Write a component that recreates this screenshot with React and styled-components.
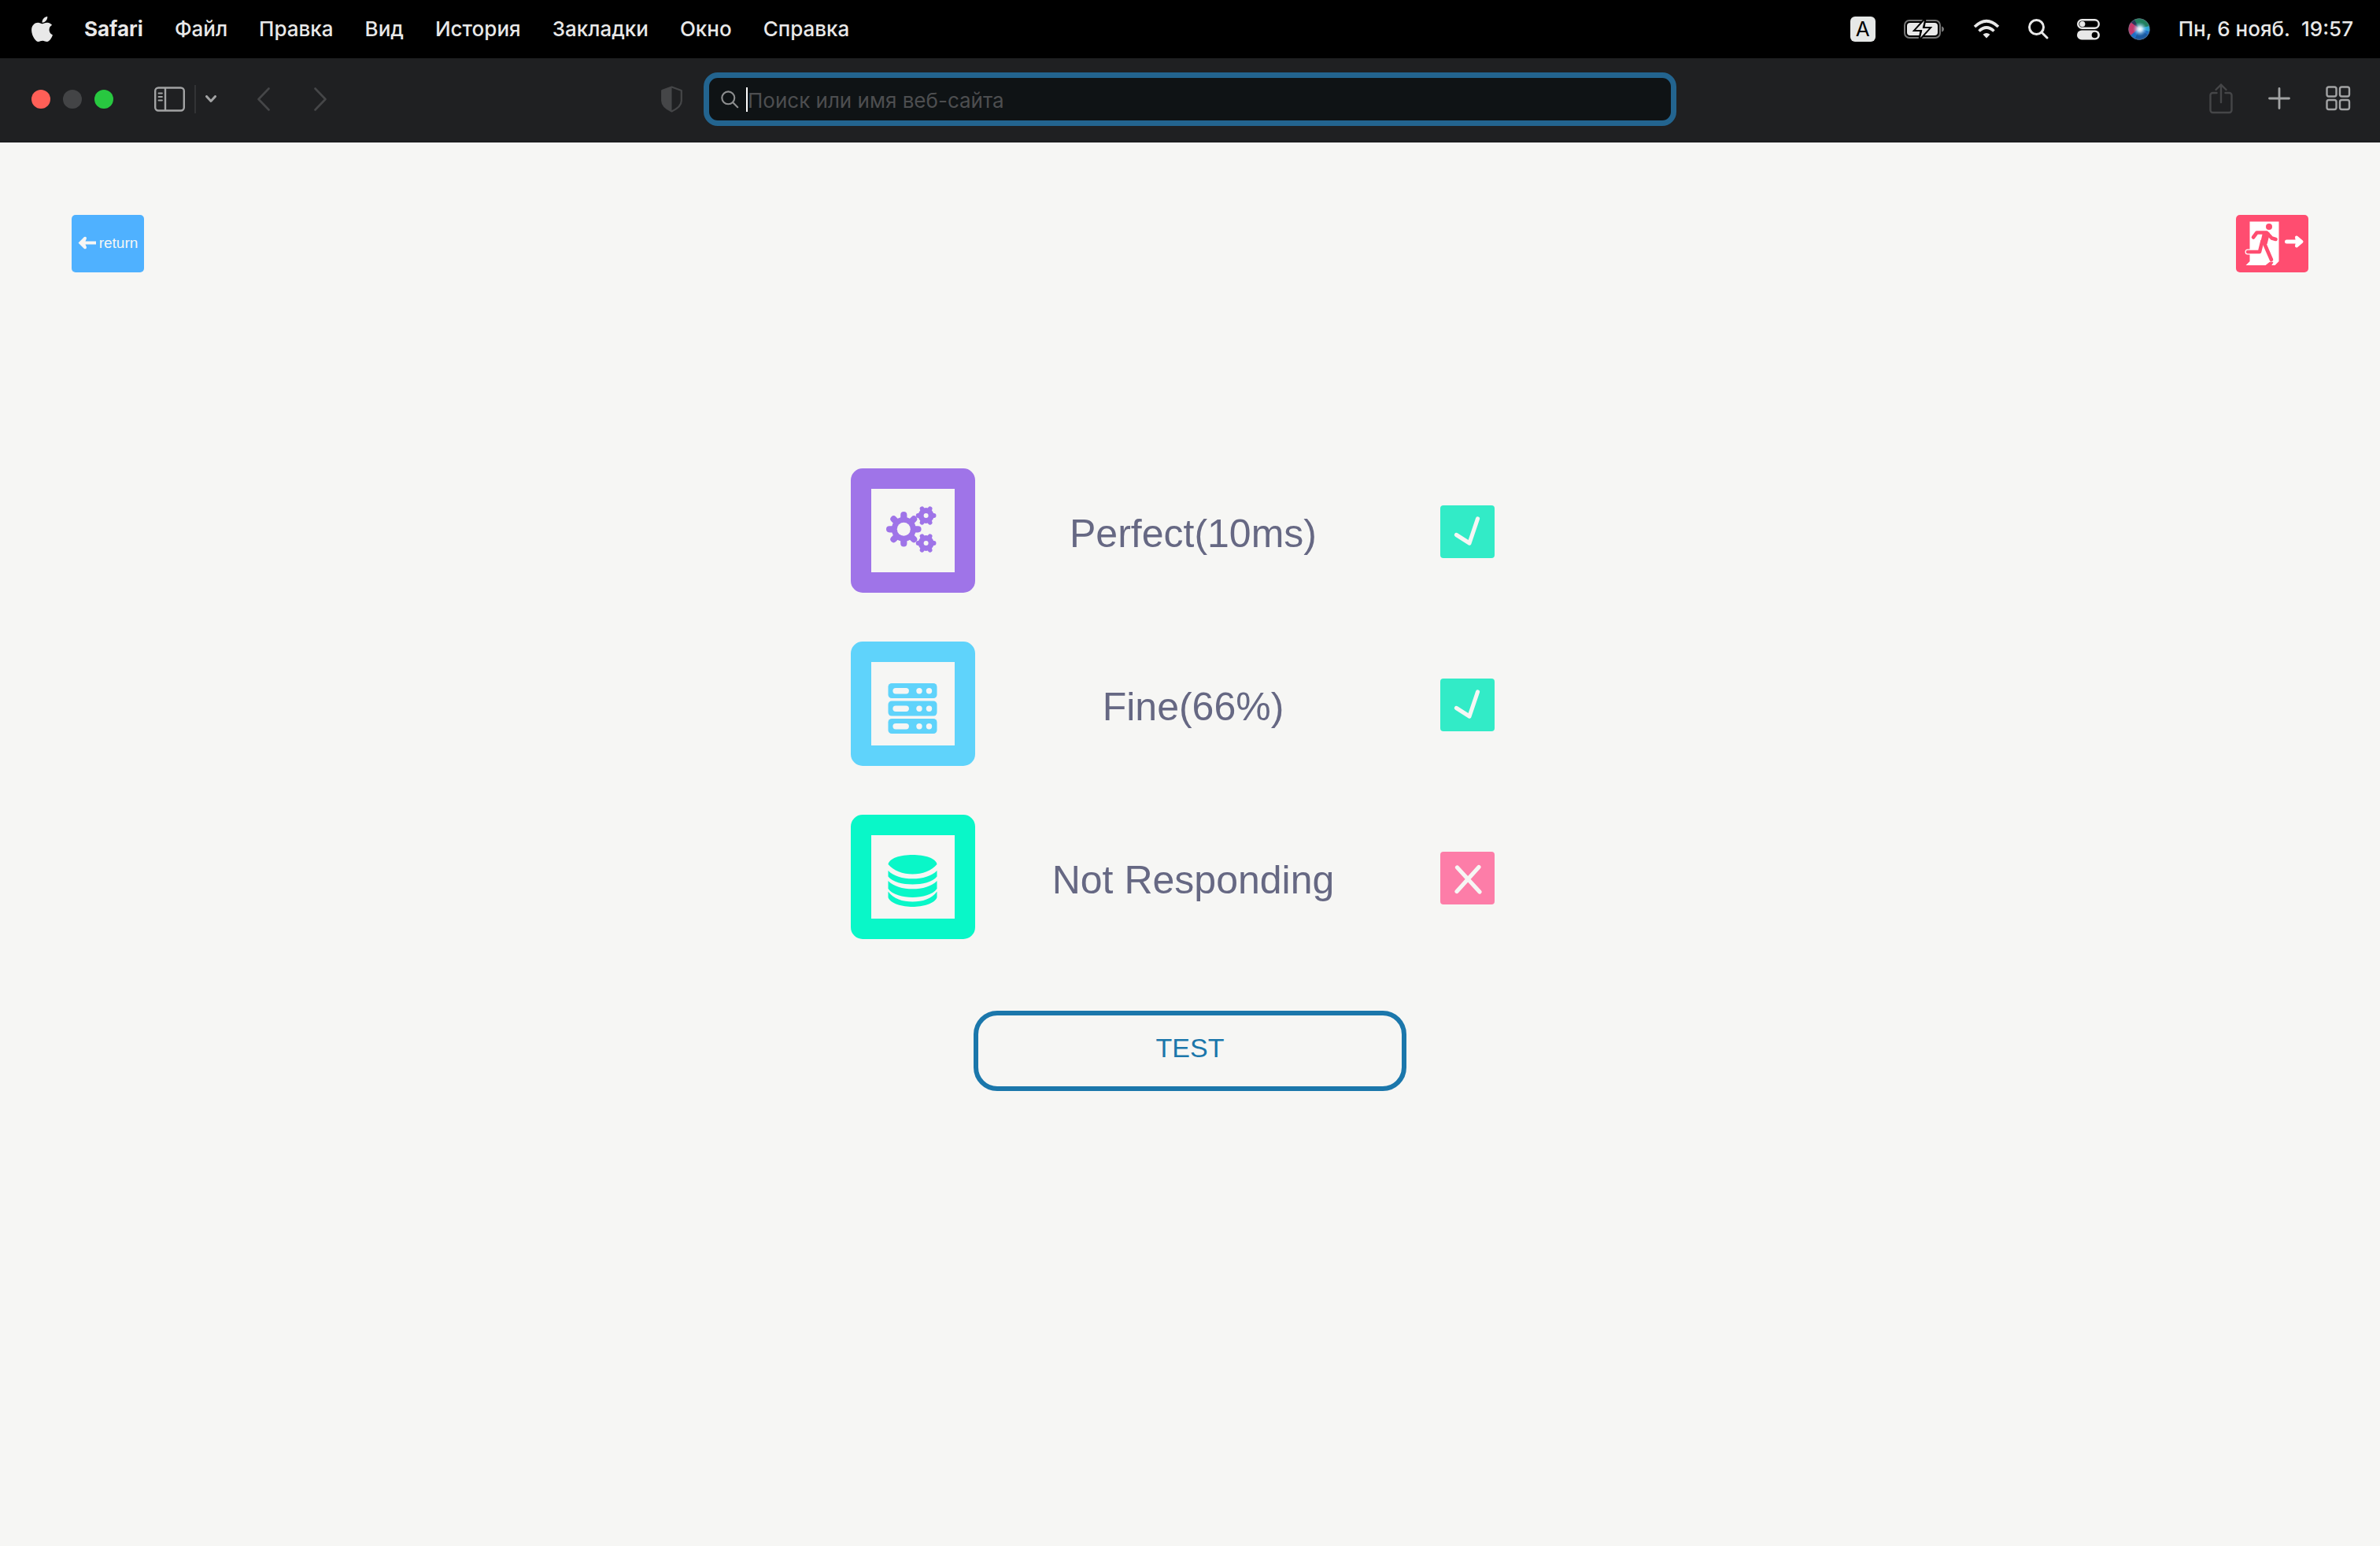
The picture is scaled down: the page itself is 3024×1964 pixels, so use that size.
import React from "react";
import styled, { createGlobalStyle } from "styled-components";

const GlobalStyle = createGlobalStyle`
  * { box-sizing: border-box; }
  body {
    margin: 0;
    background: #f6f6f4;
    font-family: "Liberation Sans", Arial, sans-serif;
  }
  button { font: inherit; cursor: pointer; }
  svg { display: block; flex: none; }
`;

const systemFont = `Inter, "Noto Sans", sans-serif`;

/* ---------- menu bar ---------- */

const MenuBar = styled.header`
  display: flex;
  justify-content: space-between;
  align-items: center;
  height: 74px;
  padding: 0 34px 0 40px;
  background: #000;
  color: #e8e8e8;
  font-family: ${systemFont};
  font-size: 26px;
  font-weight: 500;
  line-height: 32px;
`;

const MenuList = styled.nav`
  display: flex;
  align-items: center;
  gap: 40px;
`;

const MenuButton = styled.button`
  padding: 0;
  border: 0;
  background: none;
  color: inherit;
  white-space: nowrap;
  && { font-weight: ${(p) => (p.$strong ? 700 : 500)}; }
`;

const StatusList = styled.div`
  display: flex;
  align-items: center;
  gap: 36px;
`;

const InputSource = styled.span`
  width: 32px;
  height: 32px;
  border-radius: 6px;
  background: #e6e8e7;
  color: #000;
  font-weight: 400;
  text-align: center;
`;

const Clock = styled.time`
  display: flex;
  gap: 14px;
  white-space: nowrap;
`;

/* ---------- browser toolbar ---------- */

const Toolbar = styled.div`
  display: grid;
  grid-template-columns: 1fr minmax(0, 1236px) 1fr;
  align-items: center;
  height: 107px;
  padding-bottom: 2px;
  background: #1f2022;
  border-bottom: 1px solid #17181a;
`;

const ToolbarSide = styled.div`
  display: flex;
  align-items: center;
  justify-content: ${(p) => (p.$end ? "flex-end" : "space-between")};
  gap: ${(p) => (p.$end ? 45 : 0)}px;
  padding: ${(p) => (p.$end ? "0 37px 2px 0" : "0 27px 0 40px")};
`;

const ToolGroup = styled.div`
  display: flex;
  align-items: center;
  gap: ${(p) => p.$gap}px;
`;

const WindowLight = styled.button`
  width: 24px;
  height: 24px;
  padding: 0;
  border: 0;
  border-radius: 50%;
  background: ${(p) => p.$color};
`;

const IconButton = styled.button`
  padding: 0;
  border: 0;
  background: none;
  color: ${(p) => (p.$dim ? "#454648" : "#a2a3a4")};
`;

const Divider = styled.span`
  width: 2px;
  height: 36px;
  background: #323335;
`;

const AddressField = styled.label`
  display: flex;
  align-items: center;
  height: 68px;
  padding: 0 15px;
  border: 7px solid #23648f;
  border-radius: 18px;
  background: #0f1315;
  color: #8d8e8f;
`;

const Caret = styled.span`
  width: 2px;
  height: 31px;
  margin-left: 9px;
  background: #fff;
`;

const AddressInput = styled.input`
  flex: 1;
  min-width: 0;
  padding: 4px 0 0;
  border: 0;
  outline: 0;
  background: none;
  color: #e8e8e8;
  font-family: ${systemFont};
  font-size: 26px;
  line-height: 32px;
  &::placeholder { color: #4d4e50; opacity: 1; }
`;

/* ---------- page ---------- */

const Page = styled.main`
  display: flex;
  flex-direction: column;
  align-items: center;
  padding: 92px 91px;
`;

const PageNav = styled.div`
  display: flex;
  justify-content: space-between;
  align-self: stretch;
`;

const NavButton = styled.button`
  display: flex;
  align-items: center;
  justify-content: center;
  gap: 3px;
  width: 92px;
  height: 73px;
  padding: 0 0 2px;
  border: 0;
  border-radius: 5px;
  background: ${(p) => p.$color};
  color: #f6f6f4;
  && { font-size: 19px; }
`;

const CheckList = styled.ul`
  display: grid;
  gap: 62px;
  margin: 249px 0 91px;
  padding: 0;
  list-style: none;
`;

const CheckRow = styled.li`
  display: grid;
  grid-template-columns: 158px 554px 150px;
  align-items: center;
`;

const Tile = styled.div`
  width: 158px;
  height: 158px;
  border: 26px solid ${(p) => p.$color};
  border-radius: 15px;
  color: ${(p) => p.$color};
`;

const CheckText = styled.span`
  padding-top: 8px;
  color: #666883;
  font-size: 50px;
  line-height: 58px;
  text-align: center;
`;

const StatusBadge = styled.div`
  width: 69px;
  height: 67px;
  margin: 2px 0 0 37px;
  border-radius: 4px;
  background: ${(p) => (p.$ok ? "#32ebc7" : "#fd7da8")};
`;

const TestButton = styled.button`
  width: 550px;
  height: 102px;
  padding: 0 0 8px;
  border: 6px solid #1b77ab;
  border-radius: 30px;
  background: none;
  color: #1b77ab;
  && { font-size: 34px; }
`;

/* ---------- drawings ---------- */

const AppleIcon = () => (
  <svg width="27" height="32" viewBox="4 32 376 448" fill="currentColor" aria-hidden="true">
    <path d="M318.7 268.7c-.2-36.7 16.4-64.4 50-84.8-18.8-26.9-47.2-41.7-84.700-44.600-35.500-2.800-74.300 20.700-88.500 20.700-15 0-49.400-19.700-76.400-19.700C63.300 141.200 4 184.800 4 273.500q0 39.300 14.400 81.200c12.800 36.700 59 126.700 107.200 125.200 25.200-.6 43-17.900 75.800-17.900 31.800 0 48.300 17.900 76.400 17.900 48.600-.7 90.400-82.500 102.600-119.300-65.200-30.700-61.700-90-61.700-91.900zm-56.600-164.200c27.300-32.400 24.800-61.900 24-72.500-24.100 1.400-52 16.400-67.900 34.900-17.500 19.800-27.800 44.300-25.600 71.900 26.100 2 49.900-11.400 69.500-34.300z" />
  </svg>
);

const BatteryIcon = () => (
  <svg width="52" height="26" viewBox="0 0 52 26" role="img" aria-label="Battery">
    <rect x="1" y="2" width="45" height="22" rx="6" fill="none" stroke="#757575" strokeWidth="2" />
    <rect x="4" y="5" width="39" height="16" rx="4" fill="#e8e8e8" />
    <path d="M48 9.500q3 1 3 3.500t-3 3.500z" fill="#757575" />
    <path d="M27 0L14 14.500h8L20 26L33 11.500h-8z" fill="#e8e8e8" stroke="#000" strokeWidth="3" />
    <path d="M26 2L15 14h8.500L21 24L32 12h-8.500z" fill="#e8e8e8" />
  </svg>
);

const WifiIcon = () => (
  <svg width="34" height="26" viewBox="0 0 34 26" role="img" aria-label="Wi-Fi" fill="none" stroke="#e8e8e8" strokeWidth="3.600">
    <path d="M2 10Q17 -4.500 32 10" />
    <path d="M7.500 15.500Q17 6.500 26.500 15.500" />
    <path d="M17 24.500L12.500 19.800Q17 16 21.500 19.800z" fill="#e8e8e8" stroke="none" />
  </svg>
);

const SearchIcon = ({ size, weight }) => (
  <svg width={size} height={size} viewBox="0 0 26 26" fill="none" stroke="currentColor" strokeWidth={weight} strokeLinecap="round" aria-hidden="true">
    <circle cx="10.500" cy="10.500" r="9" />
    <path d="M17 17l7 7" />
  </svg>
);

const ControlsIcon = () => (
  <svg width="29" height="27" viewBox="0 0 29 27" role="img" aria-label="Control centre">
    <rect x="1.200" y="1.200" width="26.600" height="10.600" rx="5.300" fill="none" stroke="#e8e8e8" strokeWidth="2.400" />
    <circle cx="6.800" cy="6.500" r="3.600" fill="#e8e8e8" />
    <rect x="0" y="14.500" width="29" height="12" rx="6" fill="#e8e8e8" />
    <circle cx="22.500" cy="20.500" r="3.800" fill="#000" />
  </svg>
);

const SiriIcon = () => (
  <svg width="28" height="28" viewBox="0 0 28 28" role="img" aria-label="Siri">
    <defs>
      <radialGradient id="siriCore">
        <stop offset="0" stopColor="#fff" />
        <stop offset="0.350" stopColor="#d9f0ff" stopOpacity="0.850" />
        <stop offset="1" stopColor="#6fb7e8" stopOpacity="0" />
      </radialGradient>
      <clipPath id="siriDisc"><circle cx="14" cy="14" r="13.500" /></clipPath>
    </defs>
    <g clipPath="url(#siriDisc)">
      <rect width="28" height="28" fill="#2b3658" />
      <path d="M7 0h21v13L14 14z" fill="#21805f" />
      <path d="M0 3l14 10-8 9H0z" fill="#c43a6c" />
      <path d="M3 22l11-9 14 1v14H5z" fill="#1f6fc4" />
      <path d="M8 28l6-14 12 8-6 6z" fill="#1b5aa0" />
      <path d="M14 13l13-3v7z" fill="#2fa9d8" />
    </g>
    <circle cx="15" cy="14" r="9" fill="url(#siriCore)" />
    <circle cx="14" cy="14" r="13.300" fill="none" stroke="#6d7684" strokeOpacity="0.600" />
  </svg>
);

const SidebarIcon = () => (
  <svg width="39" height="32" viewBox="0 0 39 32" fill="none" stroke="currentColor" strokeWidth="2.400" aria-hidden="true">
    <rect x="1.200" y="1.500" width="36.600" height="29" rx="4" />
    <path d="M14 2v28" />
    <path d="M5.500 8.500h4.500M5.500 13h4.500M5.500 17.500h4.500" strokeWidth="1.800" strokeLinecap="round" />
  </svg>
);

const ChevronIcon = ({ width, height, d, weight }) => (
  <svg width={width} height={height} viewBox={`0 0 ${width} ${height}`} fill="none" stroke="currentColor" strokeWidth={weight} strokeLinecap="round" strokeLinejoin="round" aria-hidden="true">
    <path d={d} />
  </svg>
);

const ShieldIcon = () => (
  <svg width="27" height="34" viewBox="0 0 27 34" aria-hidden="true">
    <path d="M13.500 1.500L25.800 6v13c0 6-6 10.500-12.300 13.500C7.200 29.500 1.200 25 1.200 19V6z" fill="none" stroke="currentColor" strokeWidth="2.200" strokeLinejoin="round" />
    <path d="M13.500 1L1 5.500V19c0 6 6 10.500 12.500 13.500z" fill="currentColor" />
  </svg>
);

const ShareIcon = () => (
  <svg width="30" height="40" viewBox="0 0 30 40" fill="none" stroke="currentColor" strokeWidth="2.400" strokeLinecap="round" strokeLinejoin="round" aria-hidden="true">
    <path d="M9.500 13H4.500a3 3 0 0 0-3 3v19a3 3 0 0 0 3 3h21a3 3 0 0 0 3-3V16a3 3 0 0 0-3-3h-5" />
    <path d="M15 25V2.500M8.500 9L15 2.500L21.500 9" />
  </svg>
);

const PlusIcon = () => (
  <svg width="28" height="28" viewBox="0 0 28 28" stroke="currentColor" strokeWidth="2.800" strokeLinecap="round" aria-hidden="true">
    <path d="M14 1.500v25M1.500 14h25" />
  </svg>
);

const GridIcon = () => (
  <svg width="32" height="32" viewBox="0 0 32 32" fill="none" stroke="currentColor" strokeWidth="2.400" aria-hidden="true">
    <rect x="1.500" y="1.500" width="12" height="12" rx="2.500" />
    <rect x="18" y="1.500" width="12" height="12" rx="2.500" />
    <rect x="1.500" y="18" width="12" height="12" rx="2.500" />
    <rect x="18" y="18" width="12" height="12" rx="2.500" />
  </svg>
);

const ArrowLeftIcon = () => (
  <svg width="24" height="17" viewBox="0 0 24 17" aria-hidden="true">
    <path d="M0.500 8.500L8 1q3-1 3 2L9.500 6.500H23v4H9.500L11 14q0 3-3 2z" fill="currentColor" />
  </svg>
);

const ExitIcon = () => (
  <svg width="92" height="71" viewBox="0 1 92 71" fill="none" strokeLinecap="round" strokeLinejoin="round" aria-hidden="true">
    <path d="M17.500 9.500H54.500V60L49.500 65H12.500L17.500 60z" fill="#fff" />
    <path d="M32 48H15" stroke="#fff" strokeWidth="7" />
    <g stroke="#ff4d70" strokeWidth="4.600">
      <circle cx="42" cy="16" r="4" fill="#ff4d70" stroke="none" />
      <path d="M22 29.500L26.500 23.500H39L45.500 30.500L50.500 32" />
      <path d="M36 25h4.500l-3 12-4-1z" fill="#ff4d70" />
      <path d="M33.500 34L30 48H15" />
      <path d="M35.500 36L45 58" />
      <path d="M38 65.500L43 61.500H46.500L44 65.500" strokeWidth="1.500" fill="#ff4d70" />
    </g>
    <path d="M64.500 35H80" stroke="#fff" strokeWidth="5" />
    <path d="M77 29.500L83.500 35L77 40.500L78 35z" stroke="#fff" strokeWidth="4" fill="#fff" />
  </svg>
);

const spokes = (cx, cy, r, count) =>
  Array.from({ length: count }, (_, i) => {
    const a = (i * 2 * Math.PI) / count;
    return `M${cx} ${cy}L${(cx + r * Math.cos(a)).toFixed(2)} ${(cy + r * Math.sin(a)).toFixed(2)}`;
  }).join("");

const Gear = ({ cx, cy, body, reach, tooth, count, hole }) => (
  <g>
    <path d={spokes(cx, cy, reach, count)} stroke="currentColor" strokeWidth={tooth} strokeLinecap="round" />
    <circle cx={cx} cy={cy} r={body} fill="currentColor" />
    <circle cx={cx} cy={cy} r={hole} fill="#f6f6f4" />
  </g>
);

const GearsIcon = () => (
  <svg width="106" height="106" viewBox="26 26 106 106" aria-hidden="true">
    <Gear cx={67.300} cy={77.300} body={15.500} reach={18.200} tooth={8.200} count={8} hole={8.500} />
    <Gear cx={95.600} cy={60} body={10} reach={10} tooth={5.800} count={6} hole={3} />
    <Gear cx={95.600} cy={95} body={10} reach={10} tooth={5.800} count={6} hole={3} />
  </svg>
);

const ServerIcon = () => (
  <svg width="106" height="106" viewBox="26 26 106 106" aria-hidden="true">
    {[53, 75.500, 98].map((y) => (
      <g key={y}>
        <rect x="47.500" y={y} width="62" height="19" rx="4.500" fill="currentColor" />
        <rect x="53.400" y={y + 6} width="20.500" height="7.500" rx="3.700" fill="#f6f6f4" />
        <circle cx="87" cy={y + 9.700} r="3.700" fill="#f6f6f4" />
        <circle cx="99.500" cy={y + 9.700} r="3.700" fill="#f6f6f4" />
      </g>
    ))}
  </svg>
);

const DatabaseIcon = () => (
  <svg width="106" height="106" viewBox="26 26 106 106" fill="currentColor" aria-hidden="true">
    <path d="M47.500 63C49 55 63 51 78.500 51S108 55 109.500 63C103 71 91 75.500 78.500 75.500S54 71 47.500 63z" />
    <path d="M47.500 71C54 78 66 81.300 78.500 81.300S103 78 109.500 71V78.500C104 85.500 91 88.500 78.500 88.500S53 85.500 47.500 78.500z" />
    <path d="M47.500 84C54 91 66 94.300 78.500 94.300S103 91 109.500 84V94C104 101.500 91 105 78.500 105S53 101.500 47.500 94z" />
    <path d="M47.500 97.500C54 107 66 110.500 78.500 110.500S103 107 109.500 97.500V105C107 113 91 117 78.500 117S50 113 47.500 105z" />
  </svg>
);

const BadgeMark = ({ ok }) => (
  <svg width="69" height="67" viewBox="0 0 69 67" fill="none" stroke="#f6f6f4" strokeWidth="5.200" strokeLinecap="round" strokeLinejoin="round" role="img" aria-label={ok ? "OK" : "Failed"}>
    <path d={ok ? "M20.500 37.500L37 48L47.500 17" : "M21.500 20L50 51M49 19.500L21 50.500"} />
  </svg>
);

/* ---------- content ---------- */

const menus = ["Файл", "Правка", "Вид", "История", "Закладки", "Окно", "Справка"];

const checks = [
  { text: "Perfect(10ms)", color: "#9f74e8", Icon: GearsIcon, ok: true },
  { text: "Fine(66%)", color: "#5fd3fb", Icon: ServerIcon, ok: true },
  { text: "Not Responding", color: "#09f7c8", Icon: DatabaseIcon, ok: false },
];

export default function App() {
  return (
    <>
      <GlobalStyle />
      <MenuBar>
        <MenuList>
          <MenuButton aria-label="Apple"><AppleIcon /></MenuButton>
          <MenuButton $strong>Safari</MenuButton>
          {menus.map((name) => (
            <MenuButton key={name}>{name}</MenuButton>
          ))}
        </MenuList>
        <StatusList>
          <InputSource>A</InputSource>
          <BatteryIcon />
          <WifiIcon />
          <SearchIcon size={26} weight={3} />
          <ControlsIcon />
          <SiriIcon />
          <Clock>
            <span>Пн, 6 нояб.</span>
            <span>19:57</span>
          </Clock>
        </StatusList>
      </MenuBar>

      <Toolbar>
        <ToolbarSide>
          <ToolGroup $gap={52}>
            <ToolGroup $gap={16}>
              <WindowLight $color="#ff5f57" aria-label="Close" />
              <WindowLight $color="#434446" aria-label="Minimise" />
              <WindowLight $color="#28c840" aria-label="Zoom" />
            </ToolGroup>
            <ToolGroup $gap={12}>
              <IconButton aria-label="Sidebar"><SidebarIcon /></IconButton>
              <Divider />
              <IconButton aria-label="Tab groups">
                <ChevronIcon width={14} height={10} d="M1.500 1.500L7 7.500L12.500 1.500" weight={3} />
              </IconButton>
            </ToolGroup>
            <ToolGroup $gap={56}>
              <IconButton $dim aria-label="Back">
                <ChevronIcon width={16} height={30} d="M14.500 1.500L1.500 15L14.500 28.500" weight={2.600} />
              </IconButton>
              <IconButton $dim aria-label="Forward">
                <ChevronIcon width={16} height={30} d="M1.500 1.500L14.500 15L1.500 28.500" weight={2.600} />
              </IconButton>
            </ToolGroup>
          </ToolGroup>
          <IconButton $dim aria-label="Privacy report"><ShieldIcon /></IconButton>
        </ToolbarSide>
        <AddressField>
          <SearchIcon size={23} weight={2.400} />
          <Caret />
          <AddressInput type="text" aria-label="Адрес" placeholder="Поиск или имя веб-сайта" />
        </AddressField>
        <ToolbarSide $end>
          <IconButton $dim aria-label="Share"><ShareIcon /></IconButton>
          <IconButton aria-label="New tab"><PlusIcon /></IconButton>
          <IconButton aria-label="Tab overview"><GridIcon /></IconButton>
        </ToolbarSide>
      </Toolbar>

      <Page>
        <PageNav>
          <NavButton $color="#4fb1ff">
            <ArrowLeftIcon />
            return
          </NavButton>
          <NavButton $color="#ff4d70" aria-label="Exit">
            <ExitIcon />
          </NavButton>
        </PageNav>
        <CheckList>
          {checks.map(({ text, color, Icon, ok }) => (
            <CheckRow key={text}>
              <Tile $color={color}><Icon /></Tile>
              <CheckText>{text}</CheckText>
              <StatusBadge $ok={ok}><BadgeMark ok={ok} /></StatusBadge>
            </CheckRow>
          ))}
        </CheckList>
        <TestButton>TEST</TestButton>
      </Page>
    </>
  );
}
